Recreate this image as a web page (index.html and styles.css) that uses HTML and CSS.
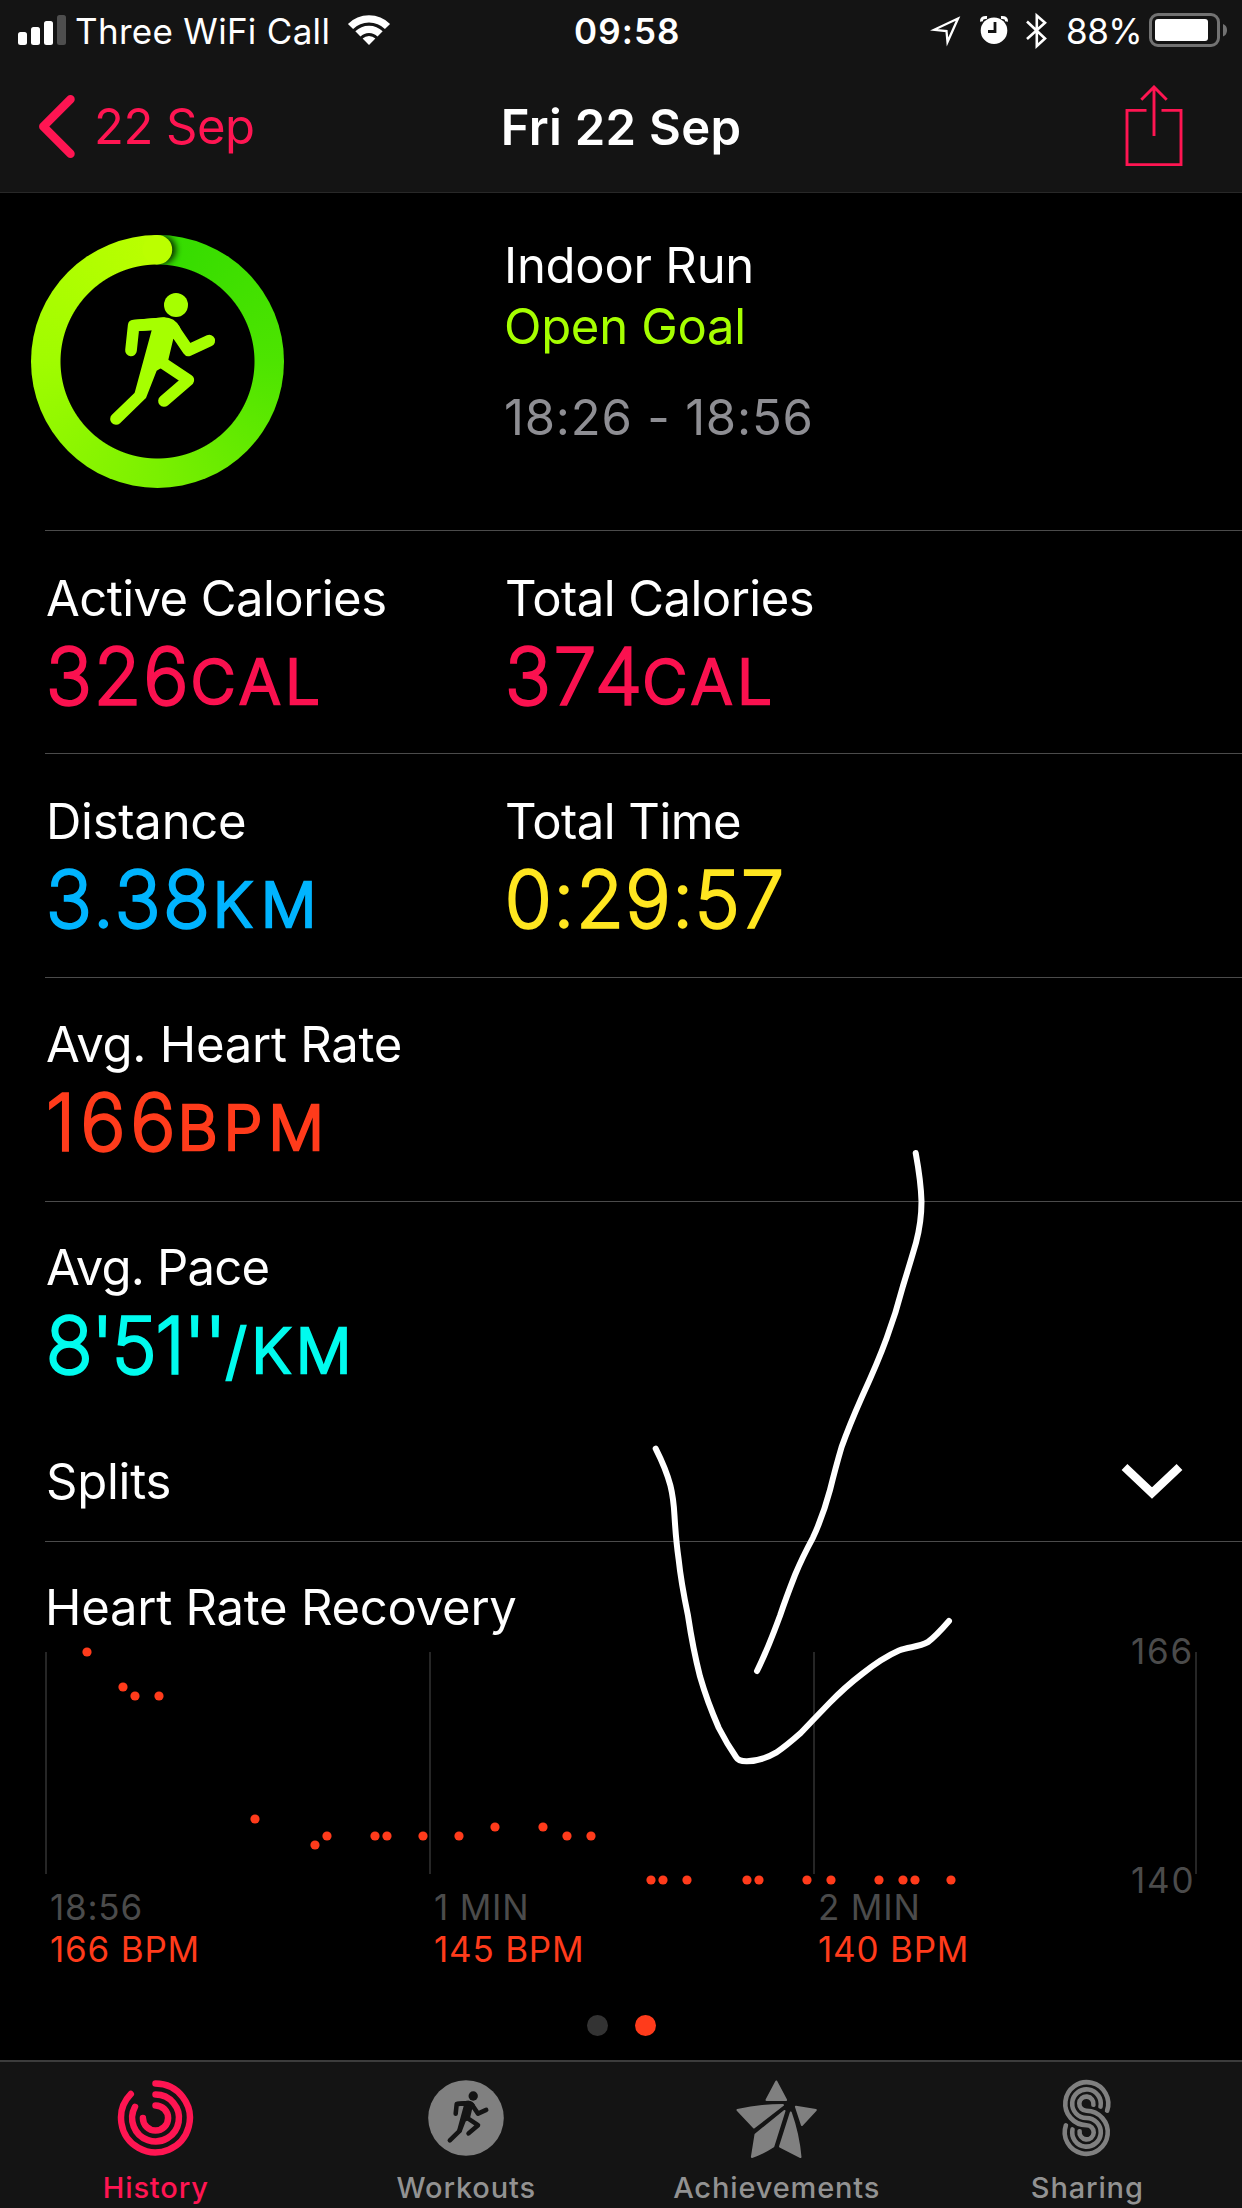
FILE: index.html
```
<!DOCTYPE html>
<html lang="en">
<head>
    <meta charset="UTF-8">
    <meta name="viewport" content="width=device-width, initial-scale=1.0">
    <title>Fri 22 Sep</title>
    <link rel="stylesheet" href="styles.css">
</head>
<body>
    <svg class="defs" width="0" height="0">
        <symbol id="runner" viewBox="93 75 759 759">
            <circle cx="528" cy="285" r="36"/>
            <path d="M455 361 L404 548 L424 572 L438 564 L470 482 L490 470 L505 449 L520 386 L552 400 L540 352 Q524 322 492 322 L400 330 L404 364 Z"/>
            <path class="limb" d="M393 421 L401 347 L490 340 M520 355 L565 421 L628 392 M484 456 L565 510 L492 573 M421 556 L348 627"/>
        </symbol>
    </svg>

    <div class="topbar">
        <div class="status">
            <div class="status-left">
                <svg width="75" height="62" viewBox="0 0 75 62" fill="#fff">
                    <rect x="18" y="32" width="9" height="13" rx="2.5"/>
                    <rect x="31" y="27" width="9" height="18" rx="2.5"/>
                    <rect x="44" y="21" width="9" height="24" rx="2.5"/>
                    <rect x="57" y="15" width="9" height="30" rx="2.5" fill="#4e4e4e"/>
                </svg>
                <span class="carrier">Three WiFi Call</span>
                <svg class="wifi" width="44" height="62" viewBox="347 0 44 62" fill="none" stroke="#fff" stroke-width="7.3">
                    <path d="M350.5 26.5 A26.2 26.2 0 0 1 387.5 26.5"/>
                    <path d="M357.9 33.9 A15.7 15.7 0 0 1 380.1 33.9"/>
                    <path d="M369 45 L362.6 38.6 A9 9 0 0 1 375.4 38.6 Z" fill="#fff" stroke="none"/>
                </svg>
            </div>
            <div class="clock">09:58</div>
            <div class="status-right">
                <svg width="136" height="62" viewBox="930 0 136 62" fill="none" stroke="#fff" stroke-width="2.6">
                    <path d="M958 18.5 L934 29.8 L946.5 31 L947.5 42 Z" stroke-width="2.3"/>
                    <circle cx="994" cy="30.7" r="13.3" fill="#fff" stroke="none"/>
                    <path d="M981.5 21.5 Q981 17 987 17.5 M1006.5 21.5 Q1007 17 1001 17.5" stroke-width="3"/>
                    <path d="M995 22 V31.5 H988" stroke="#141414" stroke-width="2.8"/>
                    <path d="M1027 21.5 L1045 38.5 L1036.8 46 V15.5 L1045 22.7 L1027 39"/>
                </svg>
                <span class="percent">88%</span>
                <svg width="95" height="62" viewBox="1147 0 95 62">
                    <rect x="1150.5" y="14.5" width="68" height="31" rx="7.5" fill="none" stroke="#727272" stroke-width="3"/>
                    <rect x="1155" y="19" width="53" height="22" rx="3" fill="#fff"/>
                    <path d="M1223 24 Q1227 25.5 1227 30.3 T1223 36.5 Z" fill="#727272"/>
                </svg>
            </div>
        </div>
        <div class="nav">
            <a class="back">
                <svg width="42" height="70" viewBox="36 92 42 70" fill="none" stroke="currentColor" stroke-width="8.5" stroke-linecap="round" stroke-linejoin="round">
                    <path d="M70.5 99.3 L43.3 126.5 L70.5 153.7"/>
                </svg>
                <span>22 Sep</span>
            </a>
            <h1>Fri 22 Sep</h1>
            <a class="share">
                <svg width="58" height="84" viewBox="1124.5 85 58 84" fill="none" stroke="currentColor" stroke-width="2.9">
                    <path d="M1146 110.4 H1126.5 V164.6 H1180.5 V110.4 H1161 M1153.5 136 V87 M1140.8 99.8 L1153.5 87 L1166.2 99.8"/>
                </svg>
            </a>
        </div>
    </div>

    <div class="summary">
        <div class="ring">
            <svg width="253" height="253" viewBox="0 0 253 253">
                <defs>
                    <clipPath id="band">
                        <path d="M126.5 0 A126.5 126.5 0 0 1 253 126.5 H223.5 A97 97 0 0 0 126.5 29.5 Z"/>
                    </clipPath>
                    <filter id="soft" x="-50%" y="-50%" width="200%" height="200%">
                        <feGaussianBlur stdDeviation="3"/>
                    </filter>
                </defs>
                <g clip-path="url(#band)">
                    <circle cx="130.5" cy="14.7" r="14.5" fill="#000" opacity="0.8" filter="url(#soft)"/>
                </g>
                <circle cx="126.5" cy="14.7" r="14.7" fill="#bbff00"/>
                <use class="runner-green" href="#runner" width="253" height="253"/>
            </svg>
        </div>
        <div class="summary-text">
            <div>Indoor Run</div>
            <div class="goal">Open Goal</div>
            <div class="hours">18:26 - 18:56</div>
        </div>
    </div>

    <div class="row row-1">
        <div class="stat">
            <div class="label tight">Active Calories</div>
            <div class="value active-cal">326<span class="unit">CAL</span></div>
        </div>
        <div class="stat">
            <div class="label tight">Total Calories</div>
            <div class="value total-cal">374<span class="unit">CAL</span></div>
        </div>
    </div>
    <div class="row row-2">
        <div class="stat">
            <div class="label">Distance</div>
            <div class="value distance">3.38<span class="unit">KM</span></div>
        </div>
        <div class="stat">
            <div class="label tight">Total Time</div>
            <div class="value time">0:29:57</div>
        </div>
    </div>
    <div class="row row-3">
        <div class="stat">
            <div class="label">Avg. Heart Rate</div>
            <div class="value heart">166<span class="unit">BPM</span></div>
        </div>
    </div>
    <div class="row row-4">
        <div class="stat">
            <div class="label pace-label">Avg. Pace</div>
            <div class="value pace">8'51''<span class="unit">/KM</span></div>
        </div>
    </div>
    <div class="splits">
        <div>Splits</div>
        <svg width="62" height="40" viewBox="0 0 62 40" fill="none" stroke="#fff" stroke-width="8.4">
            <path d="M3.5 5 L31 31 L58.5 5"/>
        </svg>
    </div>

    <div class="recovery">
        <div class="recovery-title">Heart Rate Recovery</div>
        <svg class="chart" width="1242" height="249" viewBox="0 1637 1242 249">
            <path class="grid" d="M46 1652 V1874 M430 1652 V1874 M814 1652 V1874 M1196 1652 V1874"/>
            <g id="dots"></g>
            <text x="1131" y="1664">166</text>
            <text x="1131" y="1892.7">140</text>
        </svg>
        <div class="times">
            <div><span>18:56</span><b>166 BPM</b></div>
            <div><span>1 MIN</span><b>145 BPM</b></div>
            <div><span>2 MIN</span><b>140 BPM</b></div>
        </div>
    </div>

    <div class="pager"><i></i><i class="on"></i></div>

    <div class="tabs">
        <a class="tab active">
            <svg width="80" height="80" viewBox="-40.5 -40 80 80" fill="none" stroke="currentColor" stroke-width="6.5" stroke-linecap="round">
                <path d="M0 -34.4 A34.4 34.4 0 1 1 -24.7 -24"/>
                <path d="M0 -23.4 A23.4 23.4 0 1 1 -20.5 -11.2"/>
                <path d="M0 -12.6 A12.6 12.6 0 1 1 -12.6 0"/>
            </svg>
            <span>History</span>
        </a>
        <a class="tab">
            <svg width="80" height="80" viewBox="-40 -40 80 80">
                <circle r="37.8" fill="#808080"/>
                <use class="runner-dark" href="#runner" x="-49.3" y="-49.3" width="98.6" height="98.6"/>
            </svg>
            <span>Workouts</span>
        </a>
        <a class="tab">
            <svg width="84" height="80" viewBox="734.5 2078 84 80" fill="#808080" stroke="#808080" stroke-width="2" stroke-linejoin="round">
                <path d="M776.8 2081.5 L786.6 2100 H767 Z"/>
                <path d="M783.5 2105 Q760 2105 738 2110 L754.5 2127.5 Z"/>
                <path d="M785 2111 L756 2134.5 L752.4 2157 Q764 2153 773.8 2146.5 Z"/>
                <path d="M791.3 2112.5 L780.5 2146.5 L801 2157 Q799 2134 791.3 2112.5 Z"/>
                <path d="M796.4 2106.8 L816.3 2110 L802.4 2125 Z"/>
            </svg>
            <span>Achievements</span>
        </a>
        <a class="tab">
            <svg width="80" height="80" viewBox="-39.5 -40 80 80" fill="none" stroke="#808080" stroke-width="4.6" stroke-linecap="round">
                <path d="M20.6 -7.3 A21.5 21.5 0 1 0 0 7.2 A7.1 7.1 0 1 1 -6.9 13.2"/>
                <path d="M14 -11.4 A14.3 14.3 0 1 0 0 0 A14.3 14.3 0 1 1 -14 11.4"/>
                <path d="M6.9 -13.2 A7.1 7.1 0 1 0 0 -7.2 A21.5 21.5 0 1 1 -20.6 7.3"/>
            </svg>
            <span>Sharing</span>
        </a>
    </div>

    <!-- hand drawn arrow over the page -->
    <svg class="scribble" width="310" height="630" viewBox="650 1145 310 630">
        <path d="M915.7 1153 Q921 1182 921.5 1201.5 Q921.5 1222 916 1242.7 Q911 1260 903 1286 Q896 1313 886.7 1338 Q878 1362 862 1396.7 Q849 1426 841.6 1447 Q836 1466 830 1490 Q823 1516 813 1537.6 Q802 1558 795 1575 Q786 1598 780 1615.7 Q767 1651 757 1671"/>
        <path d="M655.7 1448.7 Q666 1469 670.4 1485.6 Q673.5 1498 674.5 1516 Q676 1541 678.6 1559 Q681 1582 688 1615.7 Q693 1649 700 1676.4 Q707 1701 718.8 1728 Q727 1744 736 1757 Q738.5 1761.5 747 1761.3 Q762 1761 776 1752.7 Q786 1746 800.7 1733 Q814 1719 829 1703.5 Q845 1687 862 1674 Q882 1658 899 1650.5 C909 1646.5 918 1647.5 928 1642 Q936 1636 949 1621"/>
    </svg>

    <script>
        // x, y of every heart rate sample
        const samples = [
            [87, 1652], [123, 1687], [135, 1696], [159, 1696], [255, 1819],
            [315, 1845], [327, 1836], [375, 1836], [387, 1836], [423, 1836],
            [459, 1836], [495, 1827], [543, 1827], [567, 1836], [591, 1836],
            [651, 1880], [663, 1880], [687, 1880], [747, 1880], [759, 1880],
            [807, 1880], [831, 1880], [879, 1880], [903, 1880], [915, 1880], [951, 1880]
        ];
        const dots = document.getElementById("dots");
        for (const [x, y] of samples) {
            const dot = document.createElementNS("http://www.w3.org/2000/svg", "circle");
            dot.setAttribute("cx", x);
            dot.setAttribute("cy", y);
            dot.setAttribute("r", 4.6);
            dots.appendChild(dot);
        }
    </script>
</body>
</html>
```

FILE: styles.css
```
* {
    box-sizing: border-box;
}
body {
    margin: 0;
    width: 1242px;
    height: 2208px;
    position: relative;
    overflow: hidden;
    display: flex;
    flex-direction: column;
    background: #000;
    color: #fff;
    font-family: Inter, "Liberation Sans", sans-serif;
    font-size: 49px;
    line-height: 60px;
    letter-spacing: -0.25px;
}
svg {
    display: block;
    flex-shrink: 0;
}
.defs {
    position: absolute;
}

/* status bar + title */
.topbar {
    height: 193px;
    background: #141414;
    border-bottom: 1px solid #282828;
}
.status {
    display: grid;
    grid-template-columns: 574px auto 1fr;
    height: 62px;
    line-height: 62px;
    font-size: 35px;
}
.status-left,
.status-right {
    display: flex;
}
.status-right {
    justify-content: flex-end;
}
.carrier {
    letter-spacing: 0.3px;
}
.wifi {
    margin-left: 17px;
}
.clock {
    font-weight: 600;
    letter-spacing: 1.1px;
}
.percent {
    width: 81px;
    letter-spacing: -0.5px;
}
.nav {
    display: grid;
    grid-template-columns: 1fr auto 1fr;
    align-items: center;
    height: 130px;
    padding: 0 59px 0 36px;
}
.back {
    display: flex;
    align-items: center;
    gap: 16px;
    color: #ff1552;
    letter-spacing: -0.5px;
}
.nav h1 {
    margin: 1px 0 0 23px;
    font-size: 49px;
    font-weight: 600;
    letter-spacing: 0.3px;
}
.share {
    justify-self: end;
    color: #ff1552;
}

/* ring and workout name */
.summary {
    display: flex;
    height: 337px;
    padding: 42px 0 0 31px;
}
.ring {
    width: 253px;
    height: 253px;
    margin-right: 220px;
    border-radius: 50%;
    background: radial-gradient(circle, #000 96.5px, transparent 97.5px),
        conic-gradient(#33db00, #4de400 25%, #7af000 50%, #a0fc00 75%, #bbff00);
}
.summary-text {
    line-height: 61px;
}
.goal {
    color: #a6ff00;
    letter-spacing: -0.3px;
}
.hours {
    margin-top: 30px;
    color: #8e8e93;
    letter-spacing: 0.8px;
}
.limb {
    fill: none;
    stroke-width: 35;
    stroke-linecap: round;
    stroke-linejoin: round;
}
.runner-green {
    fill: #a6ff00;
    stroke: #a6ff00;
    stroke-width: 0;
}
.runner-dark {
    fill: #141414;
    stroke: #141414;
    stroke-width: 0;
}

/* numbers */
.row {
    display: grid;
    grid-template-columns: 459px 1fr;
    margin-left: 45px;
    border-top: 1px solid #4b4b4b;
}
.row-1 {
    height: 223px;
    padding-top: 38px;
}
.row-2 {
    height: 224px;
    padding-top: 38px;
}
.row-3 {
    height: 224px;
    padding-top: 37px;
}
.row-4 {
    height: 220px;
    padding-top: 36px;
}
.label {
    padding-left: 1px;
}
.tight {
    letter-spacing: -0.55px;
}
.pace-label {
    letter-spacing: -0.8px;
}
/* thin face with a stroke on top gives the rounder digits */
.value {
    margin-top: 2px;
    padding-left: 1px;
    font-size: 77px;
    font-weight: 200;
    line-height: 90px;
    -webkit-text-stroke: 3.5px currentColor;
}
.unit {
    font-size: 62px;
    font-weight: 300;
    line-height: 1;
    letter-spacing: 4.4px;
    -webkit-text-stroke: 2.5px currentColor;
}
.active-cal {
    color: #fa114f;
    letter-spacing: 2.1px;
}
.total-cal {
    color: #fa114f;
    letter-spacing: 3.1px;
}
.total-cal .unit {
    margin-left: -3px;
}
.distance {
    color: #00b4ff;
    letter-spacing: 2.8px;
}
.distance .unit {
    letter-spacing: 8px;
}
.time {
    color: #ffe620;
    letter-spacing: 1.7px;
}
.heart {
    color: #ff3b1b;
    letter-spacing: 5.1px;
}
.heart .unit {
    margin-left: -3px;
    letter-spacing: 5.8px;
}
.pace {
    color: #00fbee;
    letter-spacing: -1.1px;
}

.splits {
    display: flex;
    align-items: center;
    justify-content: space-between;
    height: 120px;
    padding: 2px 59px 0 46px;
}

/* chart */
.recovery {
    height: 429px;
}
.recovery-title {
    height: 96px;
    margin-left: 45px;
    padding-top: 36px;
    border-top: 1px solid #4b4b4b;
}
.chart {
    overflow: visible;
    font-size: 35px;
    letter-spacing: 1.8px;
    fill: #4b4b4b;
}
.grid {
    stroke: #262626;
    stroke-width: 2;
}
#dots {
    fill: #ff3b1b;
}
.times {
    display: grid;
    grid-template-columns: 384px 384px 1fr;
    padding-left: 50px;
    font-size: 35px;
    line-height: 42px;
    letter-spacing: 0.8px;
}
.times span {
    display: block;
    color: #4b4b4b;
}
.times b {
    font-weight: 400;
    color: #ff3b1b;
}
.pager {
    display: flex;
    justify-content: center;
    gap: 27px;
    height: 90px;
    padding-top: 45px;
}
.pager i {
    width: 21px;
    height: 21px;
    border-radius: 50%;
    background: #333;
}
.pager .on {
    background: #ff3b1b;
}

/* tab bar */
.tabs {
    display: grid;
    grid-template-columns: repeat(4, 1fr);
    height: 148px;
    padding-top: 16px;
    background: #141414;
    border-top: 2px solid #3c3c3c;
}
.tab {
    display: flex;
    flex-direction: column;
    align-items: center;
    gap: 12px;
    color: #929292;
    font-size: 29px;
    font-weight: 500;
    line-height: 36px;
    letter-spacing: 0.85px;
}
.tab span {
    padding-left: 1px;
}
.active {
    color: #ff1552;
}

.scribble {
    position: absolute;
    left: 650px;
    top: 1145px;
    fill: none;
    stroke: #fff;
    stroke-width: 6;
    stroke-linecap: round;
}
```
